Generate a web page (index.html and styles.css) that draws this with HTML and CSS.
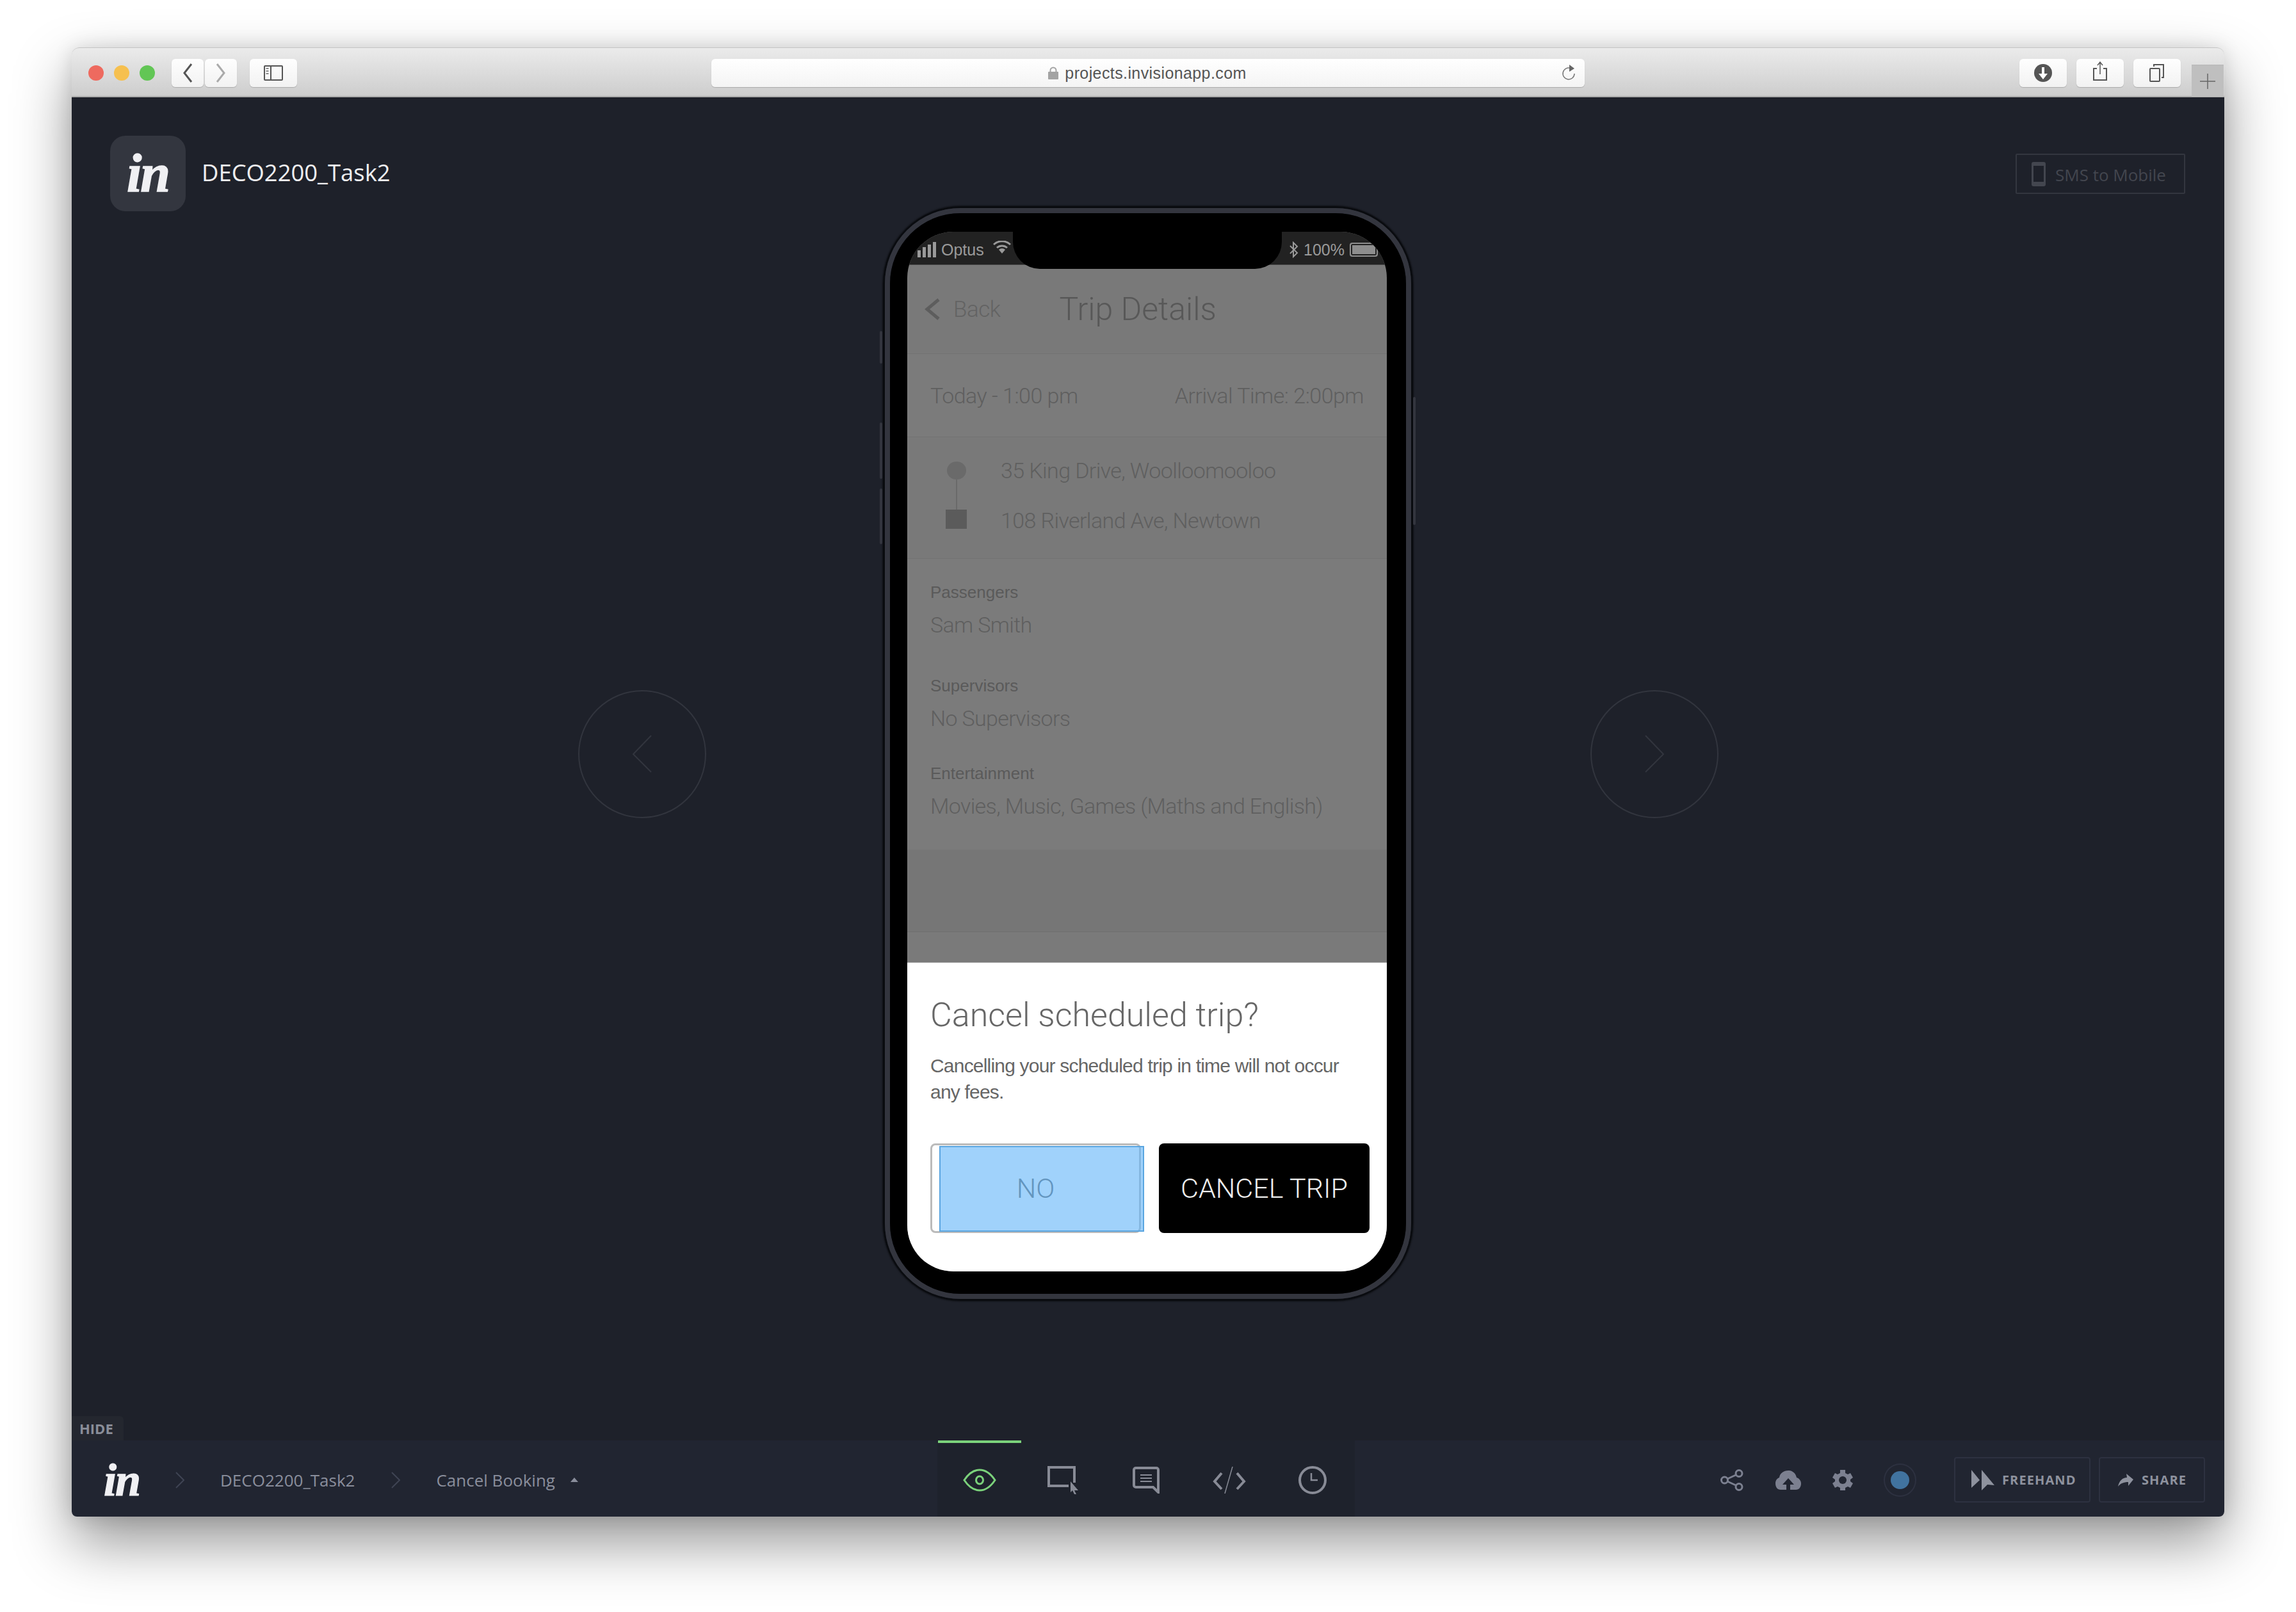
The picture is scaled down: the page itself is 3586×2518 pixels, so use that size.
FILE: index.html
```html
<!DOCTYPE html>
<html lang="en">
<head>
	<meta charset="UTF-8">
	<title>DECO2200_Task2</title>
	<link rel="stylesheet" href="styles.css">
</head>
<body>
	<div class="window">
		<!-- safari toolbar -->
		<div class="toolbar">
			<span class="light light-red"></span>
			<span class="light light-yellow"></span>
			<span class="light light-green"></span>
			<div class="tool-btn nav-back">
				<svg width="16" height="32" viewBox="0 0 16 32"><path d="M14 2 3 16l11 14" fill="none" stroke="#555" stroke-width="3"/></svg>
			</div>
			<div class="tool-btn nav-forward">
				<svg width="16" height="32" viewBox="0 0 16 32"><path d="M2 2l11 14L2 30" fill="none" stroke="#aaa" stroke-width="3"/></svg>
			</div>
			<div class="tool-btn sidebar-btn">
				<svg width="30" height="24" viewBox="0 0 30 24"><rect x="1" y="1" width="28" height="22" rx="1" fill="none" stroke="#555" stroke-width="2"/><path d="M11 1v22" stroke="#555" stroke-width="2"/><path d="M3.500 5h4M3.500 9h4M3.500 13h4" stroke="#888" stroke-width="2"/></svg>
			</div>
			<div class="url-bar">
				<svg class="lock" width="16" height="20" viewBox="0 0 16 20"><path d="M3.500 9V6a4.500 4.500 0 0 1 9 0v3" fill="none" stroke="#a3a3a3" stroke-width="2"/><rect y="8" width="16" height="12" rx="1" fill="#a3a3a3"/></svg>
				<span class="url-text">projects.invisionapp.com</span>
				<svg class="reload" width="22" height="26" viewBox="0 0 22 26"><path d="M14 5.500A9 9 0 1 0 20 14" fill="none" stroke="#777" stroke-width="1.500"/><path d="M12 0l8 6-8 5z" fill="#666"/></svg>
			</div>
			<div class="tool-btn action-btn action-first">
				<svg width="28" height="28" viewBox="0 0 28 28"><circle cx="14" cy="14" r="14" fill="#555"/><path d="M12 5h4v10h5l-7 9-7-9h5z" fill="#fff"/></svg>
			</div>
			<div class="tool-btn action-btn">
				<svg width="24" height="30" viewBox="0 0 24 30" class="up-icon"><path d="M7 11H2v18h20V11h-5" fill="none" stroke="#555" stroke-width="2"/><path d="M12 20V2M8 6l4-5 4 5" fill="none" stroke="#555" stroke-width="1.500"/></svg>
			</div>
			<div class="tool-btn action-btn">
				<svg width="26" height="28" viewBox="0 0 26 28"><path d="M8 4V1h15v20h-3" fill="none" stroke="#555" stroke-width="2"/><rect x="2" y="7" width="15" height="20" rx="1" fill="none" stroke="#555" stroke-width="2"/></svg>
			</div>
			<div class="new-tab">
				<svg width="24" height="24" viewBox="0 0 24 24"><path d="M12 0v24M0 12h24" stroke="#666" stroke-width="1.500"/></svg>
			</div>
		</div>

		<div class="stage">
			<div class="stage-head">
				<div class="brand">
					<div class="brand-logo"><span class="in-mark">in</span></div>
					<h1 class="brand-title">DECO2200_Task2</h1>
				</div>
				<div class="sms-btn">
					<svg width="22" height="38" viewBox="0 0 22 38"><rect width="22" height="38" rx="3" fill="#43464f"/><rect x="3" y="6" width="16" height="25" fill="#1e212a"/></svg>
					<span>SMS to Mobile</span>
				</div>
			</div>

			<div class="viewer">
				<div class="round-arrow">
					<svg width="34" height="62" viewBox="0 0 34 62"><path d="M31 2 3 31l28 28" fill="none" stroke="#32353e" stroke-width="2"/></svg>
				</div>

				<div class="phone">
					<span class="side-key key-a"></span>
					<span class="side-key key-b"></span>
					<span class="side-key key-c"></span>
					<span class="side-key key-d"></span>
					<div class="phone-band">
						<div class="phone-bezel">
							<div class="screen">
								<div class="notch"></div>
								<div class="status-bar">
									<div class="status-group">
										<svg width="32" height="24" viewBox="0 0 32 24"><path d="M2 13h5v11H2zM10 8h5v16h-5zM18 4h5v20h-5zM26 0h5v24h-5z" fill="#9a9a9a"/></svg>
										<span class="status-text">Optus</span>
										<svg class="wifi" width="28" height="20" viewBox="0 0 28 20"><path d="M1 6a19 19 0 0 1 26 0M6 11a12 12 0 0 1 16 0" fill="none" stroke="#9a9a9a" stroke-width="3"/><path d="M9 14a7 7 0 0 1 10 0l-5 6z" fill="#9a9a9a"/></svg>
									</div>
									<div class="status-group">
										<svg width="15" height="26" viewBox="0 0 15 26"><path d="M2 7l11 11-6 6V2l6 6L2 19" fill="none" stroke="#9a9a9a" stroke-width="2"/></svg>
										<span class="status-text pct">100%</span>
										<span class="battery"></span>
									</div>
								</div>

								<div class="nav-row">
									<svg width="26" height="34" viewBox="0 0 26 34"><path d="M23 2 5 17l18 15" fill="none" stroke="#5d5d5d" stroke-width="5"/></svg>
									<span class="nav-back-text">Back</span>
									<span class="nav-title">Trip Details</span>
								</div>

								<div class="time-row">
									<span>Today - 1:00 pm</span>
									<span>Arrival Time: 2:00pm</span>
								</div>

								<div class="route">
									<div class="route-marks">
										<span class="route-dot"></span>
										<span class="route-line"></span>
										<span class="route-end"></span>
									</div>
									<div class="route-text">
										<span>35 King Drive, Woolloomooloo</span>
										<span>108 Riverland Ave, Newtown</span>
									</div>
								</div>

								<div class="info">
									<div class="info-group">
										<div class="info-label">Passengers</div>
										<div class="info-value">Sam Smith</div>
									</div>
									<div class="info-group">
										<div class="info-label">Supervisors</div>
										<div class="info-value">No Supervisors</div>
									</div>
									<div class="info-group info-last">
										<div class="info-label">Entertainment</div>
										<div class="info-value">Movies, Music, Games (Maths and English)</div>
									</div>
								</div>

								<div class="blank-a"></div>
								<div class="blank-b"></div>

								<div class="sheet">
									<h2 class="sheet-title">Cancel scheduled trip?</h2>
									<p class="sheet-text">Cancelling your scheduled trip in time will not occur any fees.</p>
									<div class="sheet-buttons">
										<div class="sheet-btn btn-no">NO<span class="hotspot"></span></div>
										<div class="sheet-btn btn-cancel">CANCEL TRIP</div>
									</div>
								</div>
							</div>
						</div>
					</div>
				</div>

				<div class="round-arrow">
					<svg width="34" height="62" viewBox="0 0 34 62"><path d="M3 2l28 29L3 59" fill="none" stroke="#32353e" stroke-width="2"/></svg>
				</div>
			</div>

			<div class="hide-tab">HIDE</div>
		</div>

		<!-- invision bar -->
		<div class="bottom-bar">
			<div class="crumbs">
				<span class="in-mark in-small">in</span>
				<svg class="crumb-sep" width="14" height="26" viewBox="0 0 14 26"><path d="M1 1l12 12L1 25" fill="none" stroke="#3f4454" stroke-width="2"/></svg>
				<span class="crumb">DECO2200_Task2</span>
				<svg class="crumb-sep" width="14" height="26" viewBox="0 0 14 26"><path d="M1 1l12 12L1 25" fill="none" stroke="#3f4454" stroke-width="2"/></svg>
				<span class="crumb">Cancel Booking</span>
				<span class="crumb-caret"></span>
			</div>

			<div class="tabs">
				<div class="tab tab-active">
					<svg width="52" height="36" viewBox="0 0 52 36"><path d="M2 18C10 6 18 2 26 2s16 4 24 16c-8 12-16 16-24 16S10 30 2 18z" fill="none" stroke="#7bd27b" stroke-width="3"/><ellipse cx="26" cy="18" rx="5.500" ry="6" fill="none" stroke="#7bd27b" stroke-width="3"/></svg>
				</div>
				<div class="tab">
					<svg width="48" height="44" viewBox="0 0 48 44"><path d="M33 31H2V2h40v24" fill="none" stroke="#888b96" stroke-width="4"/><path d="M36 24l12 14-6 0 3 6-3 0-3-6-3 3z" fill="#888b96"/></svg>
				</div>
				<div class="tab">
					<svg width="42" height="42" viewBox="0 0 42 42"><path d="M32 32H5a3 3 0 0 1-3-3V5a3 3 0 0 1 3-3h32a3 3 0 0 1 3 3v35z" fill="none" stroke="#888b96" stroke-width="4"/><path d="M12 13h18M12 18h18M12 23h18" stroke="#888b96" stroke-width="2"/></svg>
				</div>
				<div class="tab">
					<svg width="52" height="42" viewBox="0 0 52 42"><path d="M14 10 3 23l11 12M38 10l11 13-11 12" fill="none" stroke="#888b96" stroke-width="4"/><path d="M31 0 19 42" stroke="#888b96" stroke-width="1.500"/></svg>
				</div>
				<div class="tab">
					<svg width="44" height="44" viewBox="0 0 44 44"><circle cx="22" cy="22" r="20" fill="none" stroke="#888b96" stroke-width="4"/><path d="M20 11v11h10" fill="none" stroke="#888b96" stroke-width="2.500"/></svg>
				</div>
			</div>

			<div class="bar-actions">
				<svg class="share-nodes" width="36" height="34" viewBox="0 0 36 34"><g fill="none" stroke="#7c8090" stroke-width="3"><circle cx="6.500" cy="17" r="5"/><circle cx="29" cy="6.500" r="5"/><circle cx="29" cy="27.500" r="5"/><path d="M11 15l13-6M11 19l13 6"/></g></svg>
				<svg class="cloud" width="40" height="30" viewBox="0 0 40 30"><path d="M8 30C3 30 0 26 0 20c0-5 3-8 6-9C7 4 13 0 20 0s12 5 13 11c4 1 7 5 7 9 0 6-3 10-8 10z" fill="#7c8090"/><path d="M20 12l-9 10h6v8h6v-8h6z" fill="#212531"/></svg>
				<svg class="gear" width="32" height="32" viewBox="0 0 32 32"><path d="M12 0h8v5l4 2 4-2 4 7-4 3v3l4 3-4 7-4-2-4 2v4h-8v-4l-4-2-4 2-4-7 4-3v-3L0 12l4-7 4 2 4-2z" fill="#7c8090"/><circle cx="16" cy="16" r="6" fill="#212531"/></svg>
				<div class="avatar"><span class="avatar-dot"></span></div>
				<div class="bar-btn btn-freehand">
					<svg width="36" height="32" viewBox="0 0 36 32"><path d="M0 0l13 16L0 28zM16 0l20 24-11-1-9 9z" fill="#8e929e"/></svg>
					<span>FREEHAND</span>
				</div>
				<div class="bar-btn btn-share">
					<svg width="24" height="20" viewBox="0 0 24 20"><path d="M13 0l11 9-8 10v-6C9 13 4 15 0 20 2 11 7 6 14 6z" fill="#8e929e"/></svg>
					<span>SHARE</span>
				</div>
			</div>
		</div>
	</div>
</body>
</html>
```

FILE: styles.css
```css
*{
	margin: 0;
	padding: 0;
	box-sizing: border-box;
}
html,body{
	height: 100%;
}
body{
	background-color: #fff;
	padding: 74px 112px 149px;
	font-family: "Open Sans", sans-serif;
	overflow: hidden;
}
svg{
	display: block;
	flex-shrink: 0;
}
.window{
	height: 2295px;
	display: flex;
	flex-direction: column;
	border-radius: 12px 12px 8px 8px;
	box-shadow: 0 40px 90px rgba(0,0,0,.42), 0 0 30px rgba(0,0,0,.12);
}

/* toolbar */
.toolbar{
	height: 78px;
	flex-shrink: 0;
	display: flex;
	align-items: flex-start;
	padding: 18px 0 0 26px;
	background: linear-gradient(#ebebeb, #cdcdcd);
	border-top: 1px solid #c4c4c4;
	border-bottom: 2px solid #ababab;
	border-radius: 12px 12px 0 0;
}
.light{
	width: 24px;
	height: 24px;
	border-radius: 50%;
	margin: 9px 16px 0 0;
}
.light-red{
	background-color: #ee6a5f;
}
.light-yellow{
	background-color: #f6c04f;
}
.light-green{
	background-color: #62c655;
	margin-right: 26px;
}
.tool-btn{
	height: 44px;
	margin-top: -1px;
	display: flex;
	align-items: center;
	justify-content: center;
	background: linear-gradient(#fefefe, #f2f2f2);
	border-radius: 6px;
	box-shadow: 0 1px 1px #aaa;
}
.nav-back{
	width: 50px;
}
.nav-forward{
	width: 50px;
	margin-left: 2px;
}
.sidebar-btn{
	width: 74px;
	margin-left: 20px;
}
.url-bar{
	width: 1364px;
	height: 44px;
	margin: -1px 0 0 647px;
	position: relative;
	display: flex;
	align-items: center;
	justify-content: center;
	gap: 10px;
	padding-right: 2px;
	background: linear-gradient(#fff, #f4f4f4);
	border-radius: 6px;
	box-shadow: 0 1px 1px #aaa;
}
.url-text{
	font-family: "Liberation Sans", sans-serif;
	font-size: 25px;
	letter-spacing: .4px;
	color: #555;
}
.reload{
	position: absolute;
	right: 14px;
	top: 9px;
}
.action-btn{
	width: 74px;
	margin-left: 15px;
}
.action-first{
	margin-left: 679px;
}
.up-icon{
	margin-top: -6px;
}
.new-tab{
	width: 50px;
	height: 50px;
	margin: 8px 0 0 17px;
	display: flex;
	align-items: center;
	justify-content: center;
	background-color: #bfbfbf;
	border-top: 1px solid #b5b5b5;
}

/* stage */
.stage{
	flex: 1;
	min-height: 0;
	display: grid;
	grid-template: 1fr / 1fr;
	background-color: #1e212a;
}
.stage-head,.viewer,.hide-tab{
	grid-area: 1 / 1;
}
.stage-head{
	display: flex;
	justify-content: space-between;
	align-items: flex-start;
	padding: 60px 61px 0 60px;
}
.brand{
	display: flex;
	align-items: center;
	gap: 25px;
}
.brand-logo{
	width: 118px;
	height: 118px;
	display: flex;
	align-items: center;
	justify-content: center;
	background-color: #33363f;
	border-radius: 24px;
}
.in-mark{
	font-family: "Liberation Serif", serif;
	font-weight: bold;
	font-style: italic;
	font-size: 84px;
	line-height: 84px;
	letter-spacing: -2px;
	color: #f0f0f3;
	-webkit-text-stroke: 1.5px #f0f0f3;
}
.brand-title{
	font-size: 36.400px;
	line-height: 48px;
	font-weight: 400;
	color: #eeeef0;
	margin-top: -4px;
}
.sms-btn{
	width: 265px;
	height: 63px;
	margin-top: 28px;
	display: flex;
	align-items: center;
	gap: 15px;
	padding-left: 23px;
	border: 2px solid #33363f;
	border-radius: 2px;
	color: #43464f;
	font-size: 26px;
	line-height: 44px;
}
.sms-btn span{
	padding-top: 2px;
}
.viewer{
	display: flex;
	justify-content: center;
	align-items: center;
	align-self: start;
	gap: 276.500px;
	padding-top: 170px;
}
.round-arrow{
	width: 200px;
	height: 200px;
	margin-top: 2px;
	display: flex;
	align-items: center;
	justify-content: center;
	border: 2px solid #32353e;
	border-radius: 50%;
}

/* phone */
.phone{
	width: 828px;
	height: 1710px;
	position: relative;
	border: 3px solid #090b0f;
	border-radius: 122px;
	box-shadow: 0 0 3px #000;
}
.side-key{
	position: absolute;
	width: 4px;
	background-color: #33353e;
	border-radius: 2px;
}
.key-a{
	left: -8px;
	top: 192px;
	height: 51px;
}
.key-b{
	left: -8px;
	top: 335px;
	height: 88px;
}
.key-c{
	left: -8px;
	top: 438px;
	height: 87px;
}
.key-d{
	right: -7px;
	top: 295px;
	height: 200px;
}
.phone-band{
	height: 100%;
	border: 8px solid #33353e;
	border-radius: 118px;
}
.phone-bezel{
	height: 100%;
	padding: 29px 30px 35px 27px;
	background-color: #000;
	border-radius: 110px;
}
.screen{
	height: 1624px;
	position: relative;
	display: flex;
	flex-direction: column;
	background-color: #797979;
	border-radius: 72px;
	overflow: hidden;
	font-family: Roboto, "Liberation Sans", sans-serif;
	font-weight: 300;
	color: #5f5f5f;
}
.notch{
	position: absolute;
	left: 165px;
	top: 0;
	width: 420px;
	height: 58px;
	background-color: #000;
	border-radius: 0 0 42px 42px;
}
.status-bar{
	height: 52px;
	flex-shrink: 0;
	display: flex;
	justify-content: space-between;
	align-items: center;
	padding: 4px 14px 0 14px;
	background-color: #222;
	border-bottom: 1px solid #4a4a4a;
}
.status-group{
	display: flex;
	align-items: center;
}
.status-text{
	font-family: "Liberation Sans", sans-serif;
	font-size: 25px;
	color: #9a9a9a;
	margin-left: 7px;
	padding-top: 2px;
}
.wifi{
	margin: -8px 0 0 14px;
}
.pct{
	margin-left: 8px;
}
.battery{
	width: 44px;
	height: 22px;
	margin-left: 8px;
	border: 2px solid #8e8e8e;
	border-radius: 4px;
	background-color: #8e8e8e;
	box-shadow: inset 0 0 0 2px #222;
}
.nav-row{
	height: 139px;
	flex-shrink: 0;
	display: flex;
	align-items: center;
	padding-left: 26px;
	border-bottom: 1px solid #727272;
}
.nav-back-text{
	font-size: 35px;
	letter-spacing: -.5px;
	margin-left: 20px;
	color: #636363;
}
.nav-title{
	font-size: 50px;
	margin-left: 92px;
	color: #585858;
}
.time-row{
	height: 130px;
	flex-shrink: 0;
	display: flex;
	justify-content: space-between;
	align-items: center;
	padding: 0 36px;
	font-size: 34px;
	letter-spacing: -.5px;
	background-color: #7b7b7b;
	border-bottom: 1px solid #727272;
}
.route{
	height: 190px;
	flex-shrink: 0;
	display: flex;
	padding: 38px 0 0 60px;
	border-bottom: 1px solid #727272;
}
.route-marks{
	width: 33px;
	display: flex;
	flex-direction: column;
	align-items: center;
}
.route-dot{
	width: 30px;
	height: 28px;
	border-radius: 50%;
	background-color: #6a6a6a;
}
.route-line{
	width: 2px;
	height: 47px;
	background-color: #6a6a6a;
}
.route-end{
	width: 33px;
	height: 30px;
	background-color: #5b5b5b;
}
.route-text{
	margin-left: 53px;
	display: flex;
	flex-direction: column;
	gap: 50px;
	font-size: 34px;
	line-height: 28px;
	letter-spacing: -.6px;
}
.info{
	height: 454px;
	flex-shrink: 0;
	padding-top: 37px;
	background-color: #7b7b7b;
	padding-left: 36px;
}
.info-group + .info-group{
	margin-top: 60px;
}
.info-group + .info-last{
	margin-top: 51px;
}
.info-label{
	font-family: "Liberation Sans", sans-serif;
	font-size: 26px;
	line-height: 30px;
	color: #5a5a5a;
}
.info-value{
	font-size: 34px;
	line-height: 40px;
	letter-spacing: -.65px;
	margin-top: 16px;
}
.blank-a{
	height: 128px;
	flex-shrink: 0;
	background-color: #767676;
}
.blank-b{
	height: 48px;
	flex-shrink: 0;
	background-color: #7a7a7a;
	border-top: 1px solid #6f6f6f;
}
.sheet{
	flex: 1;
	padding: 52px 27px 0 36px;
	background-color: #fff;
	border-top: 1px solid #aaa;
}
.sheet-title{
	font-size: 52px;
	line-height: 60px;
	font-weight: 300;
	color: #666;
}
.sheet-text{
	margin-top: 28px;
	width: 660px;
	font-family: "Liberation Sans", sans-serif;
	font-size: 30px;
	letter-spacing: -.8px;
	line-height: 41px;
	font-weight: 400;
	color: #666;
}
.sheet-buttons{
	margin-top: 60px;
	display: flex;
	gap: 28px;
}
.sheet-btn{
	width: 329px;
	height: 140px;
	position: relative;
	display: flex;
	align-items: center;
	justify-content: center;
	font-size: 43px;
	border-radius: 8px;
}
.btn-no{
	border: 3px solid #bbb;
	color: #666;
}
.hotspot{
	position: absolute;
	left: 11px;
	top: 1px;
	width: 320px;
	height: 134px;
	background-color: rgba(97,180,248,.6);
	border: 2px solid #5aa5e0;
}
.btn-cancel{
	background-color: #000;
	color: #eee;
}

/* bottom bar */
.hide-tab{
	align-self: end;
	justify-self: start;
	width: 81px;
	height: 38px;
	padding-left: 12px;
	font-size: 22px;
	line-height: 38px;
	font-weight: 700;
	color: #8a8e99;
	background-color: #24272f;
	border-radius: 0 6px 0 0;
}
.bottom-bar{
	height: 119px;
	flex-shrink: 0;
	display: grid;
	grid-template-columns: 1352px 652px 1fr;
	background-color: #212531;
	border-radius: 0 0 8px 8px;
}
.crumbs{
	display: flex;
	align-items: center;
	padding: 4px 0 0 50px;
	color: #8a8e9c;
	font-size: 26px;
}
.in-small{
	width: 55px;
	font-size: 72px;
	line-height: 60px;
	-webkit-text-stroke-width: 1.2px;
}
.crumb-sep{
	margin: 0 56px 0 57px;
}
.crumb-caret{
	width: 0;
	height: 0;
	margin-left: 24px;
	border-left: 6px solid transparent;
	border-right: 6px solid transparent;
	border-bottom: 7px solid #8a8e9c;
}
.tabs{
	display: flex;
	padding-left: 1px;
	background-color: #1e222c;
}
.tab{
	width: 130px;
	display: flex;
	align-items: center;
	justify-content: center;
	border-top: 4px solid transparent;
}
.tab-active{
	border-top-color: #7bd27b;
}
.bar-actions{
	display: flex;
	justify-content: flex-end;
	align-items: center;
	padding: 4px 30px 0 0;
}
.cloud{
	margin-left: 50px;
}
.gear{
	margin-left: 49px;
}
.avatar{
	width: 51px;
	height: 52px;
	margin-left: 48px;
	display: flex;
	align-items: center;
	justify-content: center;
	border: 2px solid #2d3140;
	border-radius: 50%;
}
.avatar-dot{
	width: 29px;
	height: 28px;
	border-radius: 50%;
	background-color: #41739f;
}
.bar-btn{
	height: 71px;
	display: flex;
	align-items: center;
	font-size: 20px;
	font-weight: 700;
	letter-spacing: 1.100px;
	color: #8e929e;
	border: 2px solid #2d3140;
	border-radius: 4px;
}
.btn-freehand{
	width: 213px;
	margin-left: 59px;
	padding-left: 25px;
	gap: 12px;
}
.btn-share{
	width: 166px;
	margin-left: 13px;
	padding-left: 28px;
	gap: 13px;
}
```
